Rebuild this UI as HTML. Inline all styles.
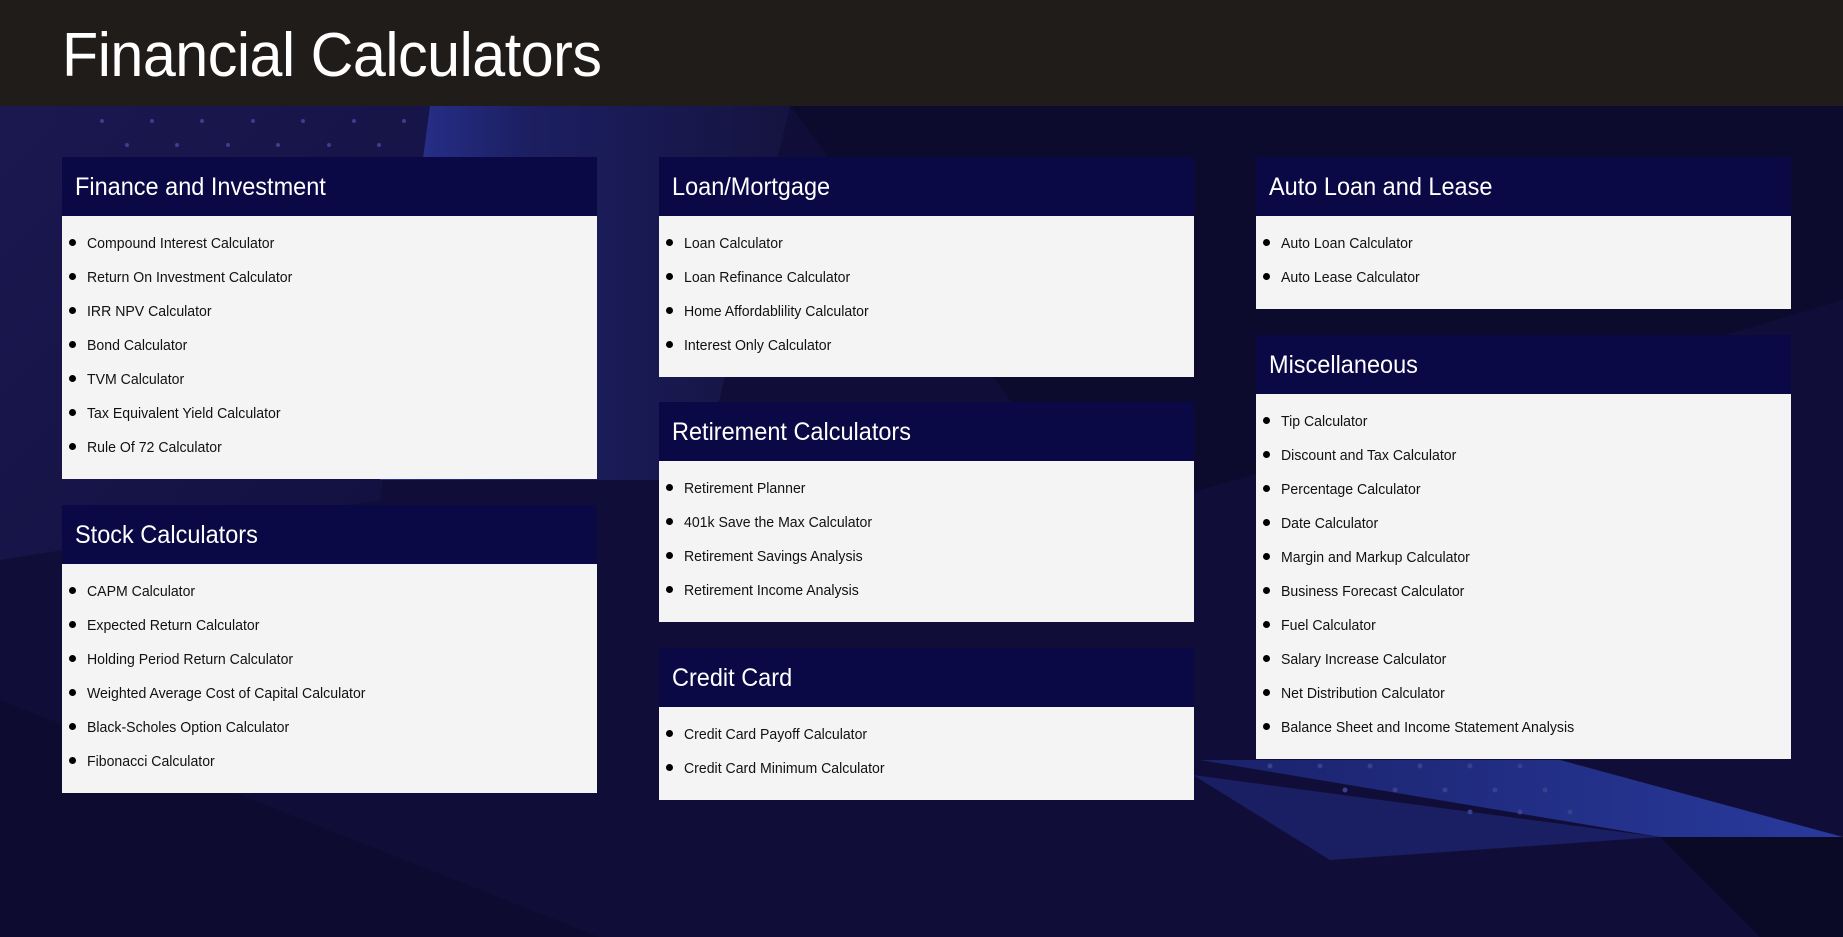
<!DOCTYPE html>
<html><head><meta charset="utf-8">
<style>
*{margin:0;padding:0;box-sizing:border-box}
html,body{width:1843px;height:937px;overflow:hidden}
body{background:#0f0d36;font-family:"Liberation Sans",sans-serif;position:relative}
#bg{position:absolute;left:0;top:0}
header{position:absolute;left:0;top:0;width:1843px;height:106px;background:#201c1a}
header h1{position:absolute;left:62px;top:22px;font-weight:400;font-size:62px;color:#fff;letter-spacing:-0.5px;line-height:1.1;transform:scaleX(0.955);transform-origin:0 0;white-space:nowrap}
.card{position:absolute;width:535px}
.card h2{height:59px;background:#0a0845;color:#fff;font-weight:400;font-size:25px;padding-left:13px;line-height:61px}
.card h2 span,.card li span{display:inline-block;transform:scaleX(0.94);transform-origin:0 50%;white-space:nowrap}
.card ul{background:#f4f4f4;padding:11px 0 14px 0;list-style:none}
.card li{height:34px;line-height:34px;font-size:15px;color:#111;padding-left:25px;position:relative}
.card li:before{content:"";position:absolute;left:7px;top:12px;width:7px;height:7px;border-radius:50%;background:#000}
</style></head><body>
<svg id="bg" width="1843" height="937" viewBox="0 0 1843 937">
<defs>
<linearGradient id="g1" x1="0" y1="0" x2="1" y2="1"><stop offset="0" stop-color="#1b1850"/><stop offset="1" stop-color="#121040"/></linearGradient>
<linearGradient id="g3" x1="0" y1="0" x2="1" y2="0"><stop offset="0" stop-color="#2a3596"/><stop offset="0.35" stop-color="#1c1f62"/><stop offset="1" stop-color="#15133f"/></linearGradient>
<linearGradient id="g2" x1="0" y1="0" x2="1" y2="0"><stop offset="0" stop-color="#1c2470"/><stop offset="1" stop-color="#2b3fa8"/></linearGradient>
</defs>
<rect width="1843" height="937" fill="#100e38"/>
<polygon points="0,106 430,106 380,500 0,560" fill="url(#g1)"/>
<polygon points="430,106 790,106 700,480 380,480" fill="url(#g3)"/>
<polygon points="790,106 1843,106 1843,300 1100,520" fill="#0c0b2e"/>
<polygon points="0,700 600,937 0,937" fill="#0d0c30"/>
<polygon points="1200,760 1560,760 1843,837 1660,837" fill="url(#g2)" opacity="0.9"/>
<polygon points="1193,775 1660,837 1330,860" fill="#1a1e62"/>
<polygon points="1660,837 1843,837 1843,937 1760,937" fill="#0a0926"/>
<g fill="#3a3f8e">
<circle cx="102" cy="121" r="2"/><circle cx="152" cy="121" r="2"/><circle cx="202" cy="121" r="2"/><circle cx="253" cy="121" r="2"/><circle cx="303" cy="121" r="2"/><circle cx="354" cy="121" r="2"/><circle cx="404" cy="121" r="2"/>
<circle cx="127" cy="145" r="2"/><circle cx="177" cy="145" r="2"/><circle cx="228" cy="145" r="2"/><circle cx="278" cy="145" r="2"/><circle cx="329" cy="145" r="2"/><circle cx="379" cy="145" r="2"/>
<circle cx="1270" cy="766" r="2.5"/><circle cx="1320" cy="766" r="2.5"/><circle cx="1370" cy="766" r="2.5"/><circle cx="1420" cy="766" r="2.5"/><circle cx="1470" cy="766" r="2.5"/><circle cx="1520" cy="766" r="2.5"/>
<circle cx="1345" cy="790" r="2.5"/><circle cx="1395" cy="790" r="2.5"/><circle cx="1445" cy="790" r="2.5"/><circle cx="1495" cy="790" r="2.5"/><circle cx="1545" cy="790" r="2.5"/>
<circle cx="1470" cy="812" r="2.5"/><circle cx="1520" cy="812" r="2.5"/><circle cx="1570" cy="812" r="2.5"/>
</g>
</svg>
<header><h1>Financial Calculators</h1></header>

<div class="card" style="left:62px;top:157px"><h2><span>Finance and Investment</span></h2><ul>
<li><span>Compound Interest Calculator</span></li><li><span>Return On Investment Calculator</span></li><li><span>IRR NPV Calculator</span></li><li><span>Bond Calculator</span></li><li><span>TVM Calculator</span></li><li><span>Tax Equivalent Yield Calculator</span></li><li><span>Rule Of 72 Calculator</span></li></ul></div>

<div class="card" style="left:62px;top:505px"><h2><span>Stock Calculators</span></h2><ul>
<li><span>CAPM Calculator</span></li><li><span>Expected Return Calculator</span></li><li><span>Holding Period Return Calculator</span></li><li><span>Weighted Average Cost of Capital Calculator</span></li><li><span>Black-Scholes Option Calculator</span></li><li><span>Fibonacci Calculator</span></li></ul></div>

<div class="card" style="left:659px;top:157px"><h2><span>Loan/Mortgage</span></h2><ul>
<li><span>Loan Calculator</span></li><li><span>Loan Refinance Calculator</span></li><li><span>Home Affordablility Calculator</span></li><li><span>Interest Only Calculator</span></li></ul></div>

<div class="card" style="left:659px;top:402px"><h2><span>Retirement Calculators</span></h2><ul>
<li><span>Retirement Planner</span></li><li><span>401k Save the Max Calculator</span></li><li><span>Retirement Savings Analysis</span></li><li><span>Retirement Income Analysis</span></li></ul></div>

<div class="card" style="left:659px;top:648px"><h2><span>Credit Card</span></h2><ul>
<li><span>Credit Card Payoff Calculator</span></li><li><span>Credit Card Minimum Calculator</span></li></ul></div>

<div class="card" style="left:1256px;top:157px"><h2><span>Auto Loan and Lease</span></h2><ul>
<li><span>Auto Loan Calculator</span></li><li><span>Auto Lease Calculator</span></li></ul></div>

<div class="card" style="left:1256px;top:335px"><h2><span>Miscellaneous</span></h2><ul>
<li><span>Tip Calculator</span></li><li><span>Discount and Tax Calculator</span></li><li><span>Percentage Calculator</span></li><li><span>Date Calculator</span></li><li><span>Margin and Markup Calculator</span></li><li><span>Business Forecast Calculator</span></li><li><span>Fuel Calculator</span></li><li><span>Salary Increase Calculator</span></li><li><span>Net Distribution Calculator</span></li><li><span>Balance Sheet and Income Statement Analysis</span></li></ul></div>
</body></html>
